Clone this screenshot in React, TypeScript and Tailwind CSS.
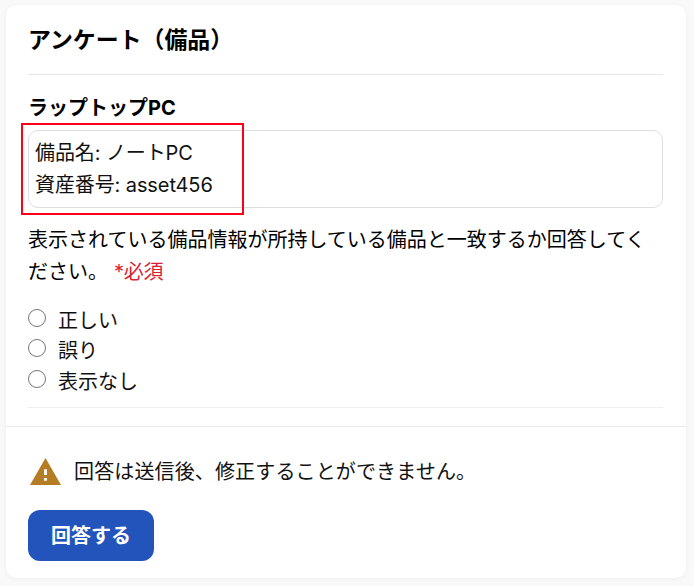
import { useState } from 'react';

const options = [
  { id: 'correct', label: '正しい' },
  { id: 'wrong', label: '誤り' },
  { id: 'none', label: '表示なし' }
];

function WarningIcon() {
  return (
    <svg viewBox="1 2 22 19" preserveAspectRatio="none" className="w-[31px] h-[27px] ml-[1.5px] mb-px shrink-0" fill="#b47d23">
      <path d="M1 21h22L12 2 1 21zm12-3h-2v-2h2v2zm0-4h-2v-4h2v4z" />
    </svg>
  );
}

export default function App() {
  const [answer, setAnswer] = useState<string | null>(null);

  return (
    <div className="h-[586px] bg-[#f9f9f9] pt-[5px] pl-[6px] text-[20px] text-[#111] font-['Inter','Noto_Sans_CJK_JP',sans-serif]">
      <div className="w-[680px] h-[573px] bg-white rounded-[10px] shadow-[0_1px_5px_rgba(0,0,0,0.05)]">
        {/* Survey */}
        <div className="h-[422px] px-[22px] pr-[23px] border-b border-[#ebebeb]">
          <h1 className="h-[70px] pt-[19px] text-[22.9px] leading-[32px] font-bold text-black border-b border-[#e6e6e6]">
            アンケート（備品）
          </h1>

          <div className="h-[333px] border-b border-[#efefef]">
            <h2 className="pt-[18px] leading-[30px] font-bold text-black">ラップトップPC</h2>

            <div className="relative mt-[7px] h-[78px] pl-[6px] pt-[6px] leading-[32px] border border-[#dedede] rounded-[10px] tracking-[-0.1px]">
              <p>備品名: ノートPC</p>
              <p>資産番号: asset456</p>
              <div className="absolute -left-[8px] -top-[8px] w-[223px] h-[92px] border-2 border-[#fb0019]" />
            </div>

            <p className="mt-[17px] leading-[31.5px] text-black">
              表示されている備品情報が所持している備品と一致するか回答してください。
              <span className="ml-[6px] text-[#dc1e32] tracking-[-0.3px]">*必須</span>
            </p>

            <div className="mt-[16px]">
              {options.map(option => (
                <label key={option.id} className="flex items-center h-[30.5px]">
                  <input
                    type="radio"
                    name="answer"
                    checked={answer === option.id}
                    onChange={() => setAnswer(option.id)}
                    className="appearance-none w-[18px] h-[18px] mb-[3px] mr-[12px] rounded-full border-[1.5px] border-[#767676] bg-white checked:border-[5px] checked:border-[#2254bc]"
                  />
                  <span className="pt-[3px]">{option.label}</span>
                </label>
              ))}
            </div>
          </div>
        </div>

        {/* Submit */}
        <div className="px-[22px] pt-[29px]">
          <div className="flex items-center h-[32px]">
            <WarningIcon />
            <p className="ml-[13.5px] tracking-[0.14px]">回答は送信後、修正することができません。</p>
          </div>
          <button className="mt-[22px] w-[126px] h-[51px] rounded-[12px] bg-[#2254bc] text-white font-bold">
            回答する
          </button>
        </div>
      </div>
    </div>
  );
}
